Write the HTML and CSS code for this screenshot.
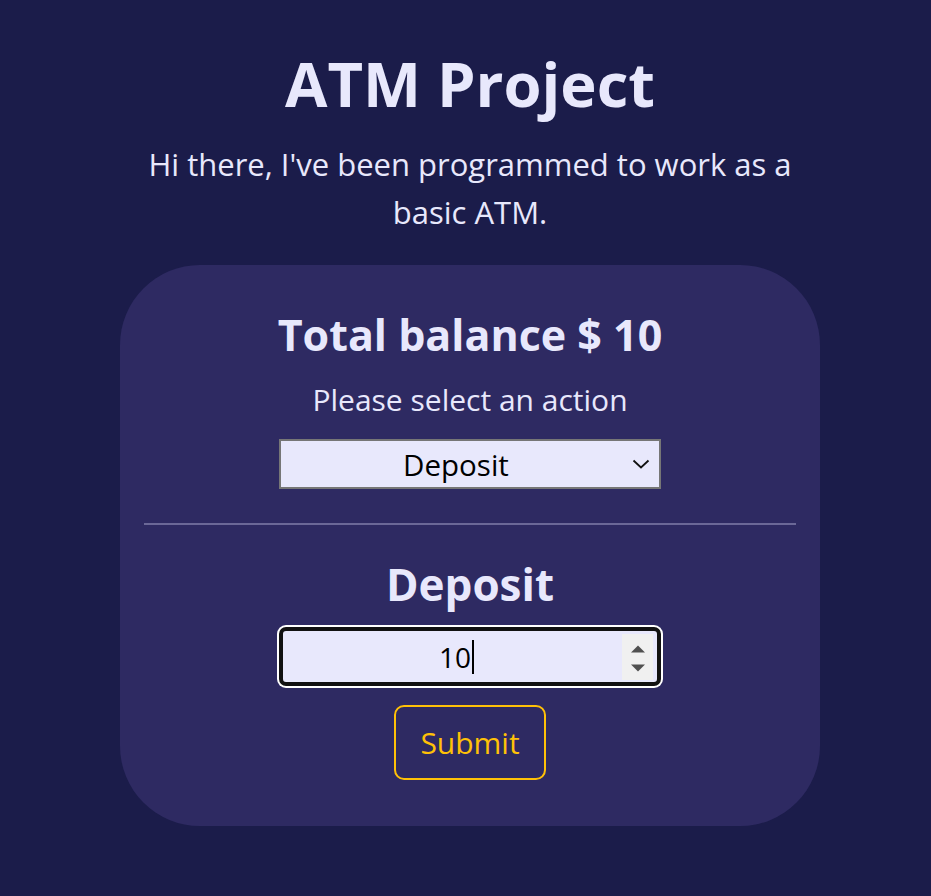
FILE: index.html
```html
<!DOCTYPE html>
<html lang="en">
<head>
<meta charset="utf-8">
<title>ATM Project</title>
<link rel="stylesheet" href="styles.css">
</head>
<body>
<main class="page">
  <h1 class="title">ATM Project</h1>
  <p class="intro">Hi there, I've been programmed to work as a basic ATM.</p>
  <section class="card">
    <h2 class="balance">Total balance $ 10</h2>
    <p class="prompt">Please select an action</p>
    <div class="select-wrap">
      <select class="action">
        <option>Deposit</option>
        <option>Withdraw</option>
      </select>
      <svg class="chevron" width="18" height="10" viewBox="0 0 18 10"><path d="M1.5 1.5 L9 8.5 L16.5 1.5" fill="none" stroke="#111" stroke-width="1.8"/></svg>
    </div>
    <hr class="divider">
    <h2 class="op-title">Deposit</h2>
    <div class="field">
      <div class="field-value"><span class="value">10</span><span class="caret"></span></div>
      <div class="spinner">
        <svg width="16" height="8" viewBox="0 0 16 8"><path d="M1 7.5 L8 0.5 L15 7.5 Z" fill="#505050"/></svg>
        <svg width="16" height="8" viewBox="0 0 16 8"><path d="M1 0.5 L15 0.5 L8 7.5 Z" fill="#505050"/></svg>
      </div>
    </div>
    <button class="submit" type="button">Submit</button>
  </section>
</main>
</body>
</html>
```
FILE: styles.css
```css
html, body {
  margin: 0;
  padding: 0;
}
body {
  background: #1b1c4a;
  color: #e8e8fc;
  font-family: "Open Sans", "Noto Sans", sans-serif;
  min-height: 896px;
  padding-left: 9px;
}
.page {
  width: 700px;
  margin: 0 auto;
  display: flex;
  flex-direction: column;
  align-items: center;
  text-align: center;
}
.title {
  font-size: 61.5px;
  font-weight: 700;
  line-height: 80px;
  margin: 43px 0 0;
}
.intro {
  font-size: 31px;
  line-height: 48px;
  margin: 17px 0 0;
}
.card {
  box-sizing: border-box;
  width: 700px;
  margin-top: 29px;
  background: #2e2a62;
  border-radius: 80px;
  padding: 42px 24px 46px;
  display: flex;
  flex-direction: column;
  align-items: center;
}
.balance {
  font-size: 43px;
  font-weight: 700;
  line-height: 56px;
  margin: 0;
}
.prompt {
  font-size: 30px;
  line-height: 40px;
  margin: 17px 0 0;
}
.select-wrap {
  position: relative;
  margin-top: 19px;
}
.action {
  appearance: none;
  -webkit-appearance: none;
  box-sizing: border-box;
  width: 382px;
  height: 50px;
  background: #e8e8fc;
  border: 2px solid #767676;
  border-radius: 0;
  font-family: inherit;
  font-size: 29.5px;
  color: #000;
  text-align: center;
  text-align-last: center;
  padding: 0 28px 0 0;
}
.chevron {
  position: absolute;
  right: 11px;
  top: 20px;
  pointer-events: none;
}
.divider {
  align-self: stretch;
  border: 0;
  height: 2px;
  background: #6b6897;
  margin: 34px 0 0;
}
.op-title {
  font-size: 44px;
  font-weight: 700;
  line-height: 56px;
  margin: 31px 0 0;
}
.field {
  box-sizing: border-box;
  width: 382px;
  height: 59px;
  margin-top: 15px;
  background: #e8e8fc;
  border: 4px solid #111;
  border-radius: 7px;
  box-shadow: 0 0 0 2px #fff;
  display: flex;
  align-items: center;
  padding: 3px 4px 2px 0;
}
.field-value {
  flex: 1;
  display: flex;
  justify-content: center;
  align-items: center;
  padding-left: 8px;
  font-size: 28px;
  color: #000;
}
.caret {
  width: 2px;
  height: 34px;
  background: #000;
  margin-left: 1px;
}
.spinner {
  width: 31px;
  align-self: stretch;
  background: #f0f0f0;
  display: flex;
  flex-direction: column;
  justify-content: space-around;
  align-items: center;
  padding: 5px 0 3px;
  box-sizing: border-box;
}
.spinner svg {
  display: block;
}
.submit {
  margin-top: 19px;
  width: 152px;
  height: 75px;
  background: transparent;
  border: 2px solid #ffc107;
  border-radius: 10px;
  color: #ffc107;
  font-family: inherit;
  font-size: 30px;
}
```
